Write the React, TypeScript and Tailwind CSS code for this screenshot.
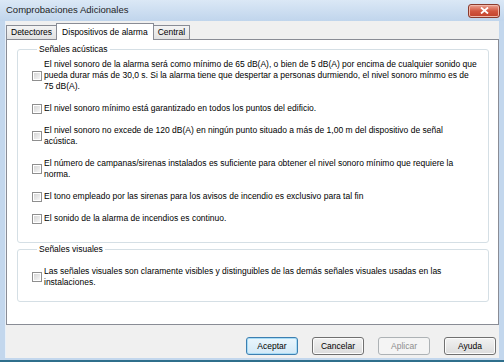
import React from 'react';

const ACOUSTIC_ITEMS: string[][] = [
  [
    'El nivel sonoro de la alarma será como mínimo de 65 dB(A), o bien de 5 dB(A) por encima de cualquier sonido que',
    'pueda durar más de 30,0 s. Si la alarma tiene que despertar a personas durmiendo, el nivel sonoro mínmo es de',
    '75 dB(A).',
  ],
  ['El nivel sonoro mínimo está garantizado en todos los puntos del edificio.'],
  [
    'El nivel sonoro no excede de 120 dB(A) en ningún punto situado a más de 1,00 m del dispositivo de señal',
    'acústica.',
  ],
  [
    'El número de campanas/sirenas instalados es suficiente para obtener el nivel sonoro mínimo que requiere la',
    'norma.',
  ],
  ['El tono empleado por las sirenas para los avisos de incendio es exclusivo para tal fin'],
  ['El sonido de la alarma de incendios es continuo.'],
];

const VISUAL_ITEMS: string[][] = [
  [
    'Las señales visuales son claramente visibles y distinguibles de las demás señales visuales usadas en las',
    'instalaciones.',
  ],
];

const CheckItem = ({ lines }: { lines: string[] }) => (
  <label className="flex items-center gap-[2px]">
    <span className="w-[10px] h-[10px] shrink-0 border border-[#8f8f8f] bg-white p-[1px]">
      <span className="block w-full h-full bg-gradient-to-br from-[#d6d6d6] to-[#f6f6f6]" />
    </span>
    <span className="flex flex-col">
      {lines.map((line) => (
        <span key={line} className="whitespace-nowrap leading-[11px]">
          {line}
        </span>
      ))}
    </span>
  </label>
);

const GroupBox = ({ title, items, className }: { title: string; items: string[][]; className: string }) => (
  <fieldset className={`border border-[#d5dfe5] rounded-[3px] pl-[14px] ${className}`}>
    <legend className="ml-[5px] px-[2px] leading-[11px]">{title}</legend>
    <div className="flex flex-col gap-[11px]">
      {items.map((lines, i) => (
        <CheckItem key={i} lines={lines} />
      ))}
    </div>
  </fieldset>
);

const Button = ({ label, primary, disabled }: { label: string; primary?: boolean; disabled?: boolean }) => (
  <button
    className={`w-[52px] h-[18px] rounded-[3px] border leading-none ${
      disabled
        ? 'border-[#adb2b5] bg-[#f4f4f4] text-[#8d8d8d]'
        : primary
          ? 'border-[#3c7fb1] bg-gradient-to-b from-[#eaf6fd] to-[#d2e9f7] shadow-[inset_0_0_0_1px_#a8dcf6]'
          : 'border-[#707070] bg-gradient-to-b from-[#f2f2f2] to-[#dcdcdc] shadow-[inset_0_0_0_1px_#fcfcfc]'
    }`}
  >
    {label}
  </button>
);

export default function App() {
  return (
    <div className="w-[504px] h-[362px] flex flex-col bg-[#c3d7ed] text-black font-['Liberation_Sans',sans-serif] text-[8.5px]">
      {/* title bar */}
      <div className="h-[21px] shrink-0 flex items-center justify-between pl-[6px] pr-[4px] bg-gradient-to-b from-[#dbe8f6] to-[#c0d5ec]">
        <span className="text-[9.5px] text-[#1e1e1e]">Comprobaciones Adicionales</span>
        <span className="w-[32px] h-[14px] rounded-[3px] border border-[#8a3a2c] bg-gradient-to-b from-[#e9a394] via-[#d2563f] to-[#c2412a] flex items-center justify-center shadow-[inset_0_0_0_1px_#f1b7a9]">
          <svg width="9" height="7" viewBox="0 0 9 7">
            <path d="M1 0.5 L8 6.5 M8 0.5 L1 6.5" stroke="#ffffff" strokeWidth="1.8" />
          </svg>
        </span>
      </div>

      {/* body */}
      <div className="flex-1 mx-[5px] bg-[#f0f0f0] flex flex-col pt-[2px] border-l border-[#e8f0f9]">
        {/* tabs */}
        <div className="flex items-end h-[16px] relative z-10 text-[8.5px]">
          <div className="h-[14px] px-[4px] border border-b-0 border-[#898c95] bg-gradient-to-b from-[#f4f4f4] to-[#e2e2e2] flex items-center">
            Detectores
          </div>
          <div className="h-[17px] -mb-[1px] px-[5px] border border-b-0 border-[#898c95] bg-white flex items-center -mx-[1px]">
            Dispositivos de alarma
          </div>
          <div className="h-[14px] px-[4px] border border-b-0 border-[#898c95] bg-gradient-to-b from-[#f4f4f4] to-[#e2e2e2] flex items-center">
            Central
          </div>
        </div>

        {/* panel */}
        <div className="h-[286px] border border-[#898c95] bg-white pl-[10px] pr-[9px] pt-[4px] flex flex-col">
          <GroupBox title="Señales acústicas" items={ACOUSTIC_ITEMS} className="pb-[18px] pt-[4px]" />
          <GroupBox title="Señales visuales" items={VISUAL_ITEMS} className="mt-[1px] pt-[11px] pb-[13px]" />
        </div>

        {/* buttons */}
        <div className="flex justify-end gap-[14px] pr-[3px] mt-[12px]">
          <Button label="Aceptar" primary />
          <Button label="Cancelar" />
          <Button label="Aplicar" disabled />
          <Button label="Ayuda" />
        </div>
        <div className="flex-1" />
      </div>
      <div className="h-[4px] shrink-0 border-b-2 border-[#2f6f8c]" />
    </div>
  );
}
